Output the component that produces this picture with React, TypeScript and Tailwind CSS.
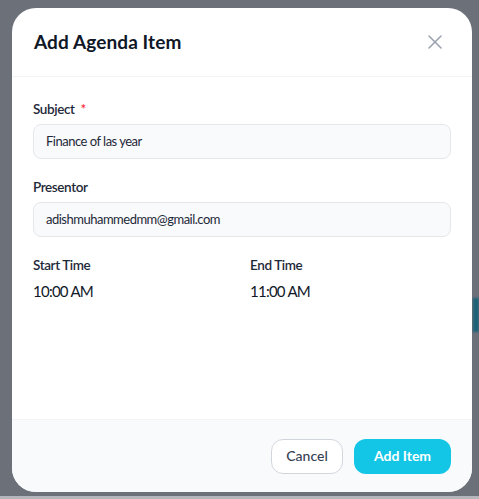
import React from 'react';
import { X } from 'lucide-react';

interface FieldProps {
  label: string;
  required?: boolean;
  value: string;
}

const Field: React.FC<FieldProps> = ({ label, required, value }) => {
  return (
    <div>
      <label className="mb-[5px] flex h-5 items-center text-[13.5px] font-semibold tracking-[-0.4px] text-gray-800">
        {label}
        {required && <span className="ml-1.5 text-red-500">*</span>}
      </label>
      <div className="flex h-[35px] items-center rounded-lg border border-gray-200 bg-gray-50 px-3 text-[13px] tracking-[-0.5px] text-gray-800">
        {value}
      </div>
    </div>
  );
};

const TimeField: React.FC<{ label: string; value: string }> = ({ label, value }) => (
  <div>
    <div className="mb-[5px] h-5 text-[13.5px] font-semibold tracking-[-0.4px] text-gray-800">{label}</div>
    <div className="h-6 text-[15px] tracking-[-0.75px] text-gray-900">{value}</div>
  </div>
);

export default function App() {
  return (
    <div
      className="relative flex h-[499px] w-full flex-col overflow-hidden bg-[#6c7079]"
      style={{ fontFamily: 'Lato, "Noto Sans", sans-serif' }}
    >
      {/* blurred page behind the overlay */}
      <div className="absolute right-0 top-[298px] h-[34px] w-[6px] bg-[#1d6378] blur-[1px]" />

      <div className="relative pl-3 pt-2">
        <div className="flex h-[484px] w-[460px] flex-col overflow-hidden rounded-3xl bg-white">
          <div className="flex h-[69px] items-center justify-between border-b border-gray-100 px-[22px]">
            <h2 className="text-[19px] font-bold tracking-[0.1px] text-gray-900">Add Agenda Item</h2>
            <button className="mr-[3px] text-gray-400">
              <X size={24} strokeWidth={1.5} />
            </button>
          </div>

          <div className="flex flex-1 flex-col gap-[18px] px-[21px] pt-[22px]">
            <Field label="Subject" required value="Finance of las year" />
            <Field label="Presentor" value="adishmuhammedmm@gmail.com" />
            <div className="grid grid-cols-2 gap-4">
              <TimeField label="Start Time" value="10:00 AM" />
              <TimeField label="End Time" value="11:00 AM" />
            </div>
          </div>

          <div className="flex h-[73px] items-center justify-end gap-[11px] border-t border-gray-100 bg-[#f8fafc] px-[21px]">
            <button className="flex h-[35px] w-[72px] items-center justify-center rounded-xl border border-gray-300 bg-white text-sm font-medium text-gray-700">
              Cancel
            </button>
            <button className="flex h-[35px] w-[97px] items-center justify-center rounded-xl bg-[#13c6e6] text-sm font-bold text-white">
              Add Item
            </button>
          </div>
        </div>
      </div>

      <div className="mt-auto h-[3px] bg-[#b4b6bb]" />
    </div>
  );
}
